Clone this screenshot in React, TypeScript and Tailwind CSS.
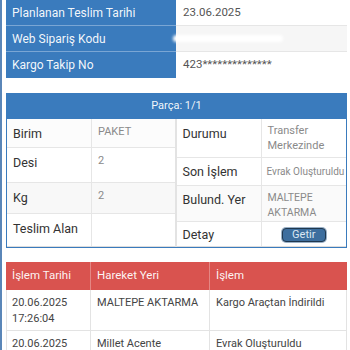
import React from 'react';

const font = { fontFamily: 'Roboto, "Noto Sans", sans-serif' };

const topRows = [
  { label: 'Planlanan Teslim Tarihi', value: '23.06.2025' },
  { label: 'Web Sipariş Kodu', value: '', blur: true },
  { label: 'Kargo Takip No', value: '423**************' },
];

const leftRows = [
  { label: 'Birim', value: 'PAKET', h: 'h-[29px]', bg: 'bg-[#fcfcfc]' },
  { label: 'Desi', value: '2', h: 'h-[35px]', bg: 'bg-white' },
  { label: 'Kg', value: '2', h: 'h-[31px]', bg: 'bg-[#f8f8f8]' },
  { label: 'Teslim Alan', value: '', h: 'h-[33px]', bg: 'bg-white' },
];

const moves = [
  { date: '20.06.2025', time: '17:26:04', place: 'MALTEPE AKTARMA', op: 'Kargo Araçtan İndirildi' },
  { date: '20.06.2025', time: '', place: 'Millet Acente', op: 'Evrak Oluşturuldu' },
];

export default function App() {
  return (
    <div
      style={font}
      className="w-[350px] h-[350px] overflow-hidden bg-white border-l-2 border-[#5a86b8] pl-[4px] pr-[3px]"
    >
      {/* ozet tablosu */}
      <div className="flex flex-col">
        {topRows.map((r, i) => (
          <div key={r.label} className="flex h-[26px]">
            <div
              className={`w-[170px] flex items-center pl-[6px] bg-[#3a7bbd] text-[12px] text-white/95 ${
                i < 2 ? 'border-b border-[#7aa6d4]' : ''
              }`}
            >
              {r.label}
            </div>
            <div
              className={`flex-1 flex items-center pl-[7px] text-[11.5px] text-[#555] ${
                i === 1 ? 'bg-[#f6f6f6]' : 'bg-white'
              } ${i < 2 ? 'border-b border-[#e6e6e6]' : ''}`}
            >
              {r.blur ? (
                <div className="-ml-[10px] w-[110px] h-[7px] rounded-full bg-white blur-[1.5px]" />
              ) : (
                r.value
              )}
            </div>
          </div>
        ))}
      </div>

      {/* parca paneli */}
      <div className="mt-[15px] border border-[#3a7bbd]">
        <div className="h-[25px] bg-[#3a7bbd] flex items-center justify-center text-[11px] text-white/95">
          Parça: 1/1
        </div>
        <div className="grid grid-cols-2">
          <div className="border-r-2 border-[#e3e3e3]">
            {leftRows.map((r, i) => (
              <div
                key={r.label}
                className={`flex ${r.h} ${r.bg} ${i < 3 ? 'border-b border-[#e6e6e6]' : 'border-b border-[#dcdcdc]'}`}
              >
                <div className="w-[85px] pl-[6px] pt-[6px] text-[12.5px] text-[#333] border-r border-[#e6e6e6]">
                  {r.label}
                </div>
                <div className="flex-1 pl-[6px] pt-[5px] text-[11px] text-[#8a8a8a]">{r.value}</div>
              </div>
            ))}
          </div>
          <div>
            <div className="flex h-[39px] border-b border-[#e6e6e6]">
              <div className="w-[85px] pl-[6px] pt-[6px] text-[12.5px] text-[#333] border-r border-[#e6e6e6]">
                Durumu
              </div>
              <div className="flex-1 pl-[6px] pt-[4px] text-[11px] leading-[15px] text-[#8a8a8a]">
                Transfer
                <br />
                Merkezinde
              </div>
            </div>
            <div className="flex h-[28px] border-b border-[#e6e6e6]">
              <div className="w-[85px] pl-[6px] flex items-center pt-[1px] text-[12.5px] text-[#333] border-r border-[#e6e6e6]">
                Son İşlem
              </div>
              <div className="flex-1 pl-[5px] flex items-center text-[10px] text-[#8a8a8a] whitespace-nowrap">
                Evrak Oluşturuldu
              </div>
            </div>
            <div className="flex h-[36px] bg-[#fafafa] border-b border-[#e6e6e6]">
              <div className="w-[85px] pl-[6px] pt-[5px] text-[12.5px] text-[#333] border-r border-[#e6e6e6]">
                Bulund. Yer
              </div>
              <div className="flex-1 pl-[6px] pt-[4px] text-[10.5px] leading-[15px] text-[#8a8a8a]">
                MALTEPE
                <br />
                AKTARMA
              </div>
            </div>
            <div className="flex h-[25px] border-b border-[#dcdcdc]">
              <div className="w-[85px] pl-[6px] pt-[4px] text-[12.5px] text-[#333] border-r border-[#e6e6e6]">
                Detay
              </div>
              <div className="flex-1 flex items-center justify-center pt-[2px]">
                <button className="h-[14px] w-[44px] rounded-[4px] bg-[#3d6e9e] border border-[#20384f] ring-1 ring-[#9ab0c6] text-[11px] leading-[12px] text-[#dbe7f3]">
                  Getir
                </button>
              </div>
            </div>
          </div>
        </div>
      </div>

      {/* hareket tablosu */}
      <div className="mt-[14px]">
        <div className="flex h-[28px] bg-[#d9534f] text-[11.5px] text-white/95">
          <div className="w-[85px] pl-[6px] flex items-center border-r border-[#e48784]">İşlem Tarihi</div>
          <div className="w-[119px] pl-[6px] flex items-center border-r border-[#e48784]">Hareket Yeri</div>
          <div className="flex-1 pl-[6px] flex items-center">İşlem</div>
        </div>
        {moves.map((m, i) => (
          <div
            key={i}
            className={`flex text-[11px] leading-[16px] text-[#444] border-b border-[#e3e3e3] border-l border-r ${
              i === 0 ? 'h-[41px]' : 'h-[30px]'
            }`}
          >
            <div className="w-[84px] pl-[5px] pt-[5px] border-r border-[#e3e3e3]">
              {m.date}
              {m.time && (
                <>
                  <br />
                  {m.time}
                </>
              )}
            </div>
            <div className="w-[119px] pl-[6px] pt-[5px] border-r border-[#e3e3e3]">{m.place}</div>
            <div className="flex-1 pl-[6px] pt-[5px]">{m.op}</div>
          </div>
        ))}
      </div>
    </div>
  );
}
